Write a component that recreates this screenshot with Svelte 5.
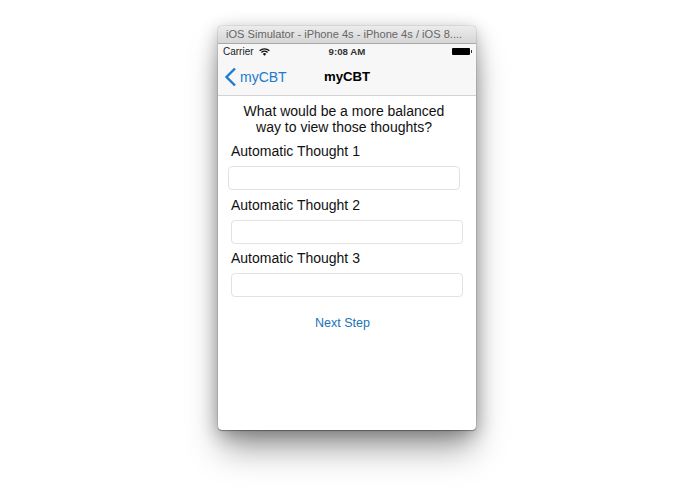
<script>
  const thoughts = [
    { label: 'Automatic Thought 1', cls: 'first' },
    { label: 'Automatic Thought 2', cls: 'second' },
    { label: 'Automatic Thought 3', cls: 'third' }
  ];
</script>

<div class="page">
  <div class="window">
    <div class="titlebar">iOS Simulator - iPhone 4s - iPhone 4s / iOS 8....</div>
    <div class="nav">
      <div class="status">
        <div class="carrier">
          <span>Carrier</span>
          <svg width="11" height="8" viewBox="0 0 11 8">
            <path d="M0.6 2.8a7 7 0 0 1 9.8 0" fill="none" stroke="#111" stroke-width="1.3" />
            <path d="M2.4 4.5a4.4 4.4 0 0 1 6.2 0" fill="none" stroke="#111" stroke-width="1.3" />
            <path d="M5.5 7.8 3.8 5.9a2.5 2.5 0 0 1 3.4 0z" fill="#111" />
          </svg>
        </div>
        <div class="time">9:08 AM</div>
        <div class="battery"><span class="cell"></span><span class="nub"></span></div>
      </div>
      <div class="bar">
        <div class="back">
          <svg width="13" height="20" viewBox="0 0 13 20">
            <path d="M11 1.5 2.5 10l8.5 8.5" fill="none" stroke="#1a7bd0" stroke-width="2.4" />
          </svg>
          <span>myCBT</span>
        </div>
        <div class="title">myCBT</div>
      </div>
    </div>
    <div class="content">
      <p class="question">What would be a more balanced<br />way to view those thoughts?</p>
      {#each thoughts as t}
        <div class="field {t.cls}">
          <div class="label">{t.label}</div>
          <input class="box" type="text" />
        </div>
      {/each}
      <div class="next">Next Step</div>
    </div>
  </div>
</div>

<style>
  :global(body) {
    margin: 0;
    background: #fff;
    font-family: "Liberation Sans", Arial, sans-serif;
  }

  .page {
    width: 695px;
    height: 494px;
    overflow: hidden;
    padding: 26px 0 0 218px;
    box-sizing: border-box;
  }

  .window {
    width: 258px;
    height: 404px;
    background: #fff;
    border-radius: 4px;
    display: flex;
    flex-direction: column;
    box-shadow:
      0 0 1px rgba(0, 0, 0, 0.6),
      0 1px 1px rgba(0, 0, 0, 0.3),
      0 4px 18px rgba(0, 0, 0, 0.3),
      0 22px 32px -4px rgba(0, 0, 0, 0.38);
  }

  .titlebar {
    height: 17px;
    line-height: 17px;
    flex: none;
    background: linear-gradient(#ececec, #d6d6d6);
    border-bottom: 1px solid #a8a8a8;
    border-radius: 4px 4px 0 0;
    color: #666;
    font-size: 11.1px;
    padding-left: 8px;
    white-space: nowrap;
    overflow: hidden;
  }

  .nav {
    flex: none;
    height: 51px;
    background: #f7f7f7;
    border-bottom: 1px solid #d2d2d2;
    display: flex;
    flex-direction: column;
  }

  .status {
    height: 15px;
    display: flex;
    align-items: center;
    justify-content: space-between;
    position: relative;
    padding: 0 4px 0 5px;
    font-size: 10px;
    color: #222;
  }

  .carrier {
    display: flex;
    align-items: center;
    gap: 5px;
  }

  .time {
    position: absolute;
    left: 0;
    right: 0;
    text-align: center;
    font-weight: 700;
    font-size: 9.7px;
    color: #333;
    pointer-events: none;
  }

  .battery {
    display: flex;
    align-items: center;
  }

  .cell {
    width: 18px;
    height: 7px;
    background: #000;
    border-radius: 1px;
  }

  .nub {
    width: 1px;
    height: 3px;
    background: #333;
    margin-left: 1px;
  }

  .bar {
    flex: 1;
    position: relative;
    display: flex;
    align-items: center;
    justify-content: center;
    padding-bottom: 1px;
  }

  .back {
    position: absolute;
    left: 6px;
    top: 8px;
    display: flex;
    align-items: center;
    gap: 3px;
    color: #1a7bd0;
    font-size: 14px;
  }

  .title {
    font-size: 13.2px;
    font-weight: 700;
    color: #000;
  }

  .content {
    flex: 1;
    display: flex;
    flex-direction: column;
  }

  .question {
    margin: 7px 6px 0 0;
    text-align: center;
    font-size: 14px;
    line-height: 16px;
    color: #111;
  }

  .field {
    display: flex;
    flex-direction: column;
    padding: 0 13px;
  }

  .label {
    font-size: 14px;
    line-height: 17px;
    color: #111;
    margin-top: 6px;
  }

  .first .label {
    margin-top: 8px;
  }

  .second .label {
    margin-top: 7px;
  }

  .box {
    height: 24px;
    width: 232px;
    margin-top: 6px;
    box-sizing: border-box;
    border: 1px solid #e2e2e2;
    border-radius: 4px;
    background: #fff;
    padding: 0;
  }

  .first .box {
    margin-left: -3px;
  }

  .next {
    margin-top: 19px;
    text-align: center;
    font-size: 12.5px;
    color: #1a73b8;
    margin-right: 9px;
  }
</style>
